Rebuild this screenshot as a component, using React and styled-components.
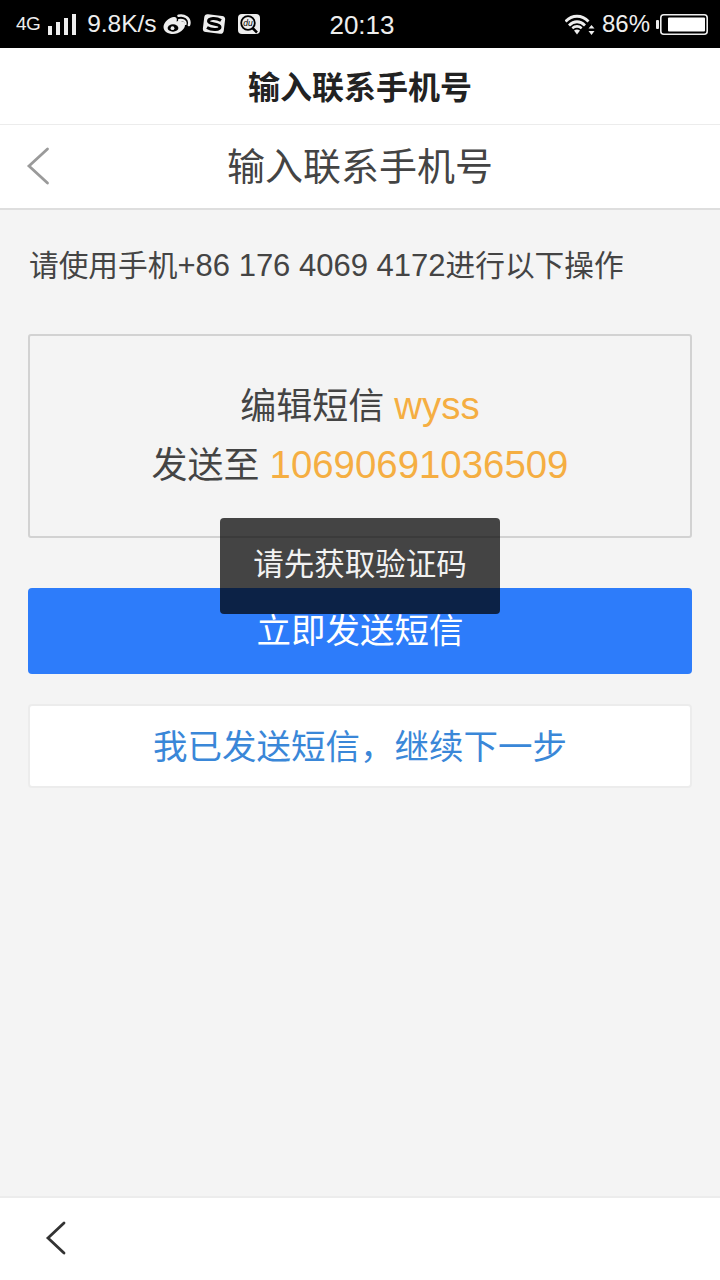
import React from "react";
import styled, { createGlobalStyle } from "styled-components";

const GlobalStyle = createGlobalStyle`
  html, body {
    margin: 0;
    padding: 0;
    height: 100%;
    background: #f4f4f4;
  }
  #root {
    height: 100%;
  }
  * {
    box-sizing: border-box;
  }
`;

const Page = styled.div`
  position: relative;
  width: 720px;
  height: 1280px;
  display: flex;
  flex-direction: column;
  overflow: hidden;
  background: #f4f4f4;
  font-family: "Liberation Sans", "Noto Sans CJK SC", sans-serif;
  color: #333;
`;

const StatusBar = styled.div`
  height: 48px;
  flex: none;
  background: #000;
  color: #eee;
  display: grid;
  grid-template-columns: 1fr auto 1fr;
  align-items: center;
  padding: 0 12px 0 16px;
`;

const StatusLeft = styled.div`
  display: flex;
  align-items: center;
`;

const StatusRight = styled.div`
  display: flex;
  align-items: center;
  justify-content: flex-end;
`;

const NetLabel = styled.span`
  font-size: 19px;
  letter-spacing: -0.6px;
  margin-right: 8px;
`;

const Speed = styled.span`
  font-size: 24.5px;
  margin: 0 6px 0 11px;
`;

const Clock = styled.span`
  font-size: 26px;
  padding-top: 2px;
`;

const Battery = styled.span`
  font-size: 24px;
  margin: 0 6px 0 7px;
`;

const Icon = styled.svg`
  display: block;
  flex: none;
  margin-right: ${(p) => p.$mr || 0}px;
`;

const TitleBar = styled.div`
  height: 77px;
  flex: none;
  background: #fff;
  border-bottom: 1px solid #ececec;
  display: flex;
  align-items: center;
  justify-content: center;
  padding-bottom: 2px;
  font-size: 32px;
  font-weight: 700;
  color: #222;
`;

const NavBar = styled.div`
  height: 85px;
  flex: none;
  position: relative;
  background: #fff;
  border-bottom: 2px solid #dedede;
  display: flex;
  align-items: center;
  justify-content: center;
  padding-bottom: 6px;
  font-size: 38px;
  color: #444;
`;

const NavBack = styled.svg`
  position: absolute;
  left: 26px;
  top: 22px;
`;

const Content = styled.main`
  flex: 1;
  padding: 38px 28px 0;
`;

const Hint = styled.p`
  margin: 0 0 0 1px;
  font-size: 29.7px;
  line-height: 36px;
  color: #444;
  white-space: nowrap;
`;

const Phone = styled.span`
  font-size: 31px;
`;

const SmsBox = styled.div`
  margin-top: 50px;
  height: 204px;
  border: 2px solid #d2d2d2;
  border-radius: 3px;
  display: flex;
  flex-direction: column;
  align-items: center;
  justify-content: center;
  font-size: 36px;
  line-height: 58px;
  color: #444;
`;

const Accent = styled.span`
  color: #f5ae42;
  font-size: 38.4px;
`;

const PrimaryButton = styled.button`
  display: block;
  width: 100%;
  height: 86px;
  margin-top: 50px;
  border: none;
  border-radius: 4px;
  background: #2d7cfa;
  color: #fff;
  font: inherit;
  font-size: 34.5px;
  padding: 0 0 6px;
`;

const SecondaryButton = styled.button`
  display: block;
  width: 100%;
  height: 84px;
  margin-top: 30px;
  border: 2px solid #ececec;
  border-radius: 4px;
  background: #fff;
  color: #3a87d8;
  font: inherit;
  font-size: 34.5px;
  padding: 0 0 4px;
`;

const Toast = styled.div`
  position: absolute;
  left: 220px;
  top: 518px;
  width: 280px;
  height: 96px;
  border-radius: 4px;
  background: rgba(0, 0, 0, 0.72);
  color: #f2f2f2;
  display: flex;
  align-items: center;
  justify-content: center;
  padding-bottom: 8px;
  font-size: 30.5px;
`;

const BottomBar = styled.div`
  height: 84px;
  flex: none;
  background: #fff;
  border-top: 2px solid #ececec;
  display: flex;
  align-items: center;
  padding-left: 44px;
`;

function SignalIcon() {
  return (
    <Icon width="28" height="21" viewBox="0 0 28 21">
      <g fill="#eee">
        <rect x="0" y="12" width="4" height="9" />
        <rect x="8" y="8" width="4" height="13" />
        <rect x="16" y="4" width="4" height="17" />
        <rect x="24" y="0" width="4" height="21" />
      </g>
    </Icon>
  );
}

function WeiboIcon() {
  return (
    <Icon width="28" height="20" viewBox="0 0 28 20" $mr={11}>
      <path d="M0.5 13 C0.5 8 7 2.5 11.5 3 C14.5 3.5 14 6 13.5 7.5 C17 6.5 22 7 22 10.5 C22.5 15 16 20 10 20 C5 20 0.5 17.5 0.5 13 Z" fill="#eee" />
      <ellipse cx="10" cy="14" rx="5.4" ry="3.7" fill="#000" />
      <circle cx="9.5" cy="14.2" r="1.9" fill="#eee" />
      <path d="M15.5 1.8 C21 0.5 28 4 26 11" fill="none" stroke="#eee" strokeWidth="2.6" strokeLinecap="round" />
      <path d="M16 6 C19.5 5.2 23 7 22.5 10" fill="none" stroke="#eee" strokeWidth="2.2" strokeLinecap="round" />
    </Icon>
  );
}

function SogouIcon() {
  return (
    <Icon width="24" height="20" viewBox="0 0 24 20" $mr={12}>
      <rect x="1.5" y="1" width="21" height="18" rx="3.5" fill="#eee" transform="rotate(7 12 10)" />
      <path d="M19 6.5 C14 3.5 6.5 4 6.5 7.3 C6.5 10.5 18 9.5 18 13 C18 16 10 16.5 5 13.5" fill="none" stroke="#000" strokeWidth="3" />
    </Icon>
  );
}

function DuIcon() {
  return (
    <Icon width="22" height="20" viewBox="0 0 22 20">
      <rect width="22" height="20" rx="4" fill="#eee" />
      <circle cx="10" cy="9" r="6.8" fill="none" stroke="#000" strokeWidth="1.8" />
      <text x="10" y="11.8" textAnchor="middle" fontSize="8.5" fontStyle="italic" fill="#000">du</text>
      <path d="M14.5 14 L19 18.5" stroke="#000" strokeWidth="2.6" />
    </Icon>
  );
}

function WifiIcon() {
  return (
    <Icon width="30" height="21" viewBox="0 0 30 21">
      <g fill="none" stroke="#eee" strokeWidth="2.8">
        <path d="M0.5 7.5 C7 0.5 17 0.5 23.5 7.5" />
        <path d="M4 11.5 C9 6.5 15 6.5 20 11.5" />
      </g>
      <path d="M6.5 13.5 C10 10.3 14 10.3 17.5 13.5 L15.8 15.2 C13.5 13.4 10.5 13.4 8.2 15.2 Z" fill="#eee" />
      <path d="M9 16.5 C11 15 13 15 15 16.5 L12 20.5 Z" fill="#eee" />
      <path d="M26.5 11 L29.5 14.5 L23.5 14.5 Z M26.5 21 L29.5 17 L23.5 17 Z" fill="#eee" />
    </Icon>
  );
}

function BatteryIcon() {
  return (
    <Icon width="52" height="21" viewBox="0 0 52 21">
      <rect x="0" y="6" width="3" height="9" rx="1" fill="#eee" />
      <rect x="4.8" y="0.8" width="46.4" height="19.4" rx="3" fill="none" stroke="#eee" strokeWidth="1.6" />
      <rect x="12" y="3.5" width="37" height="14" rx="1" fill="#fff" />
    </Icon>
  );
}

function Chevron({ color, d }) {
  return (
    <path
      d={d}
      fill="none"
      stroke={color}
      strokeWidth="2.8"
      strokeLinecap="round"
      strokeLinejoin="miter"
    />
  );
}

export default function App() {
  return (
    <Page>
      <GlobalStyle />
      <StatusBar>
        <StatusLeft>
          <NetLabel>4G</NetLabel>
          <SignalIcon />
          <Speed>9.8K/s</Speed>
          <WeiboIcon />
          <SogouIcon />
          <DuIcon />
        </StatusLeft>
        <Clock>20:13</Clock>
        <StatusRight>
          <WifiIcon />
          <Battery>86%</Battery>
          <BatteryIcon />
        </StatusRight>
      </StatusBar>
      <TitleBar>输入联系手机号</TitleBar>
      <NavBar>
        <NavBack width="26" height="40" viewBox="0 0 26 40">
          <Chevron color="#9a9a9a" d="M21.5 2 L3 19 L21.5 36" />
        </NavBack>
        输入联系手机号
      </NavBar>
      <Content>
        <Hint>
          请使用手机<Phone>+86 176 4069 4172</Phone>进行以下操作
        </Hint>
        <SmsBox>
          <div>
            编辑短信 <Accent>wyss</Accent>
          </div>
          <div>
            发送至 <Accent>10690691036509</Accent>
          </div>
        </SmsBox>
        <PrimaryButton>立即发送短信</PrimaryButton>
        <SecondaryButton>我已发送短信，继续下一步</SecondaryButton>
      </Content>
      <BottomBar>
        <svg width="24" height="36" viewBox="0 0 24 36">
          <Chevron color="#333" d="M20 2 L4 17 L20 32" />
        </svg>
      </BottomBar>
      <Toast>请先获取验证码</Toast>
    </Page>
  );
}
